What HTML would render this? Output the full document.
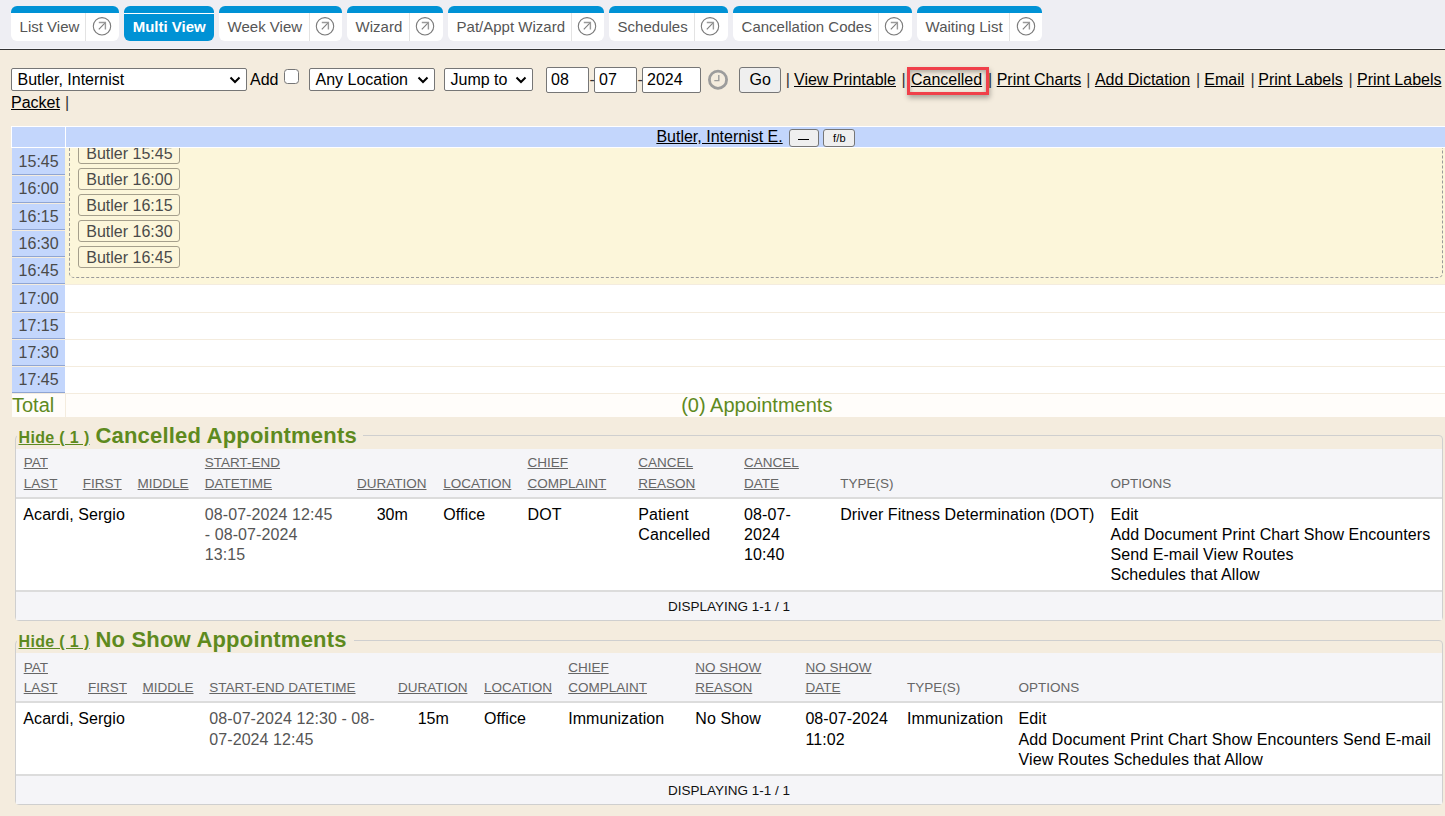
<!DOCTYPE html><html><head><meta charset="utf-8"><style>
*{box-sizing:border-box}
html,body{margin:0;padding:0}
body{width:1445px;height:816px;overflow:hidden;position:relative;background:#f4ecde;font-family:"Liberation Sans",sans-serif}
.abs{position:absolute}
.t{position:absolute;white-space:nowrap;line-height:1;font-family:"Liberation Sans",sans-serif}
.u{text-decoration:underline}
#bar{position:absolute;left:0;top:0;width:1445px;height:49px;background:#eeeef3;border-bottom:1px solid #f6f6fa}
#bar:after{content:"";position:absolute;left:0;top:49px;width:1445px;height:1px;background:#333}
.tab{position:absolute;top:6px;height:35px;background:#fff;border-top:7px solid #0092d5;border-radius:6px 6px 6px 6px}
.tab.act{background:#0092d5;border-top:7px solid #0092d5}
.tab.act:after{content:"";position:absolute;left:0;right:0;top:0;height:1px;background:#fff}
.tdiv{position:absolute;top:13px;width:1px;height:28px;background:#e3e3e3}
.ico{position:absolute;width:20px;height:20px}
.ico svg{display:block}
.sel{position:absolute;top:68px;height:23px;background:#fff;border:1px solid #767676;border-radius:2px}
.chev{position:absolute}
.chev svg{display:block}
.cb{position:absolute;width:15px;height:15px;background:#fff;border:1px solid #767676;border-radius:3.5px}
.inp{position:absolute;background:#fff;border:1px solid #767676;border-radius:2px}
.btn{position:absolute;background:#efefef;border:1px solid #767676;border-radius:3px}
.sbtn{position:absolute;background:#efefef;border:1px solid #767676;border-radius:3px}
.sep{position:absolute;width:1px;height:16px;background:#333}
#hl{position:absolute;left:907px;top:67px;width:82px;height:28px;border:3px solid #f0404a;box-shadow:1px 3px 5px rgba(0,0,0,.3), inset 0 2px 4px rgba(0,0,0,.3)}
.tc{position:absolute;left:12px;width:53px;background:#c3d6fc;border-bottom:1px solid #8fa5d3;box-sizing:content-box}
.abtn{position:absolute;width:102px;height:22px;border:1px solid #a59f8c;border-radius:3px;background:#fcf6da}
.fs{position:absolute;left:15px;width:1428px;border:1px solid #cfcfcf;border-radius:4px}
</style></head><body>
<div id="bar"></div>
<div class="tab" style="left:11px;width:108px"></div>
<div class="t " style="left:19.6px;top:19.00px;font-size:15px;color:#555;">List View</div>
<div class="tdiv" style="left:85px"></div>
<div class="ico" style="left:91.9px;top:16.4px"><svg width="20" height="20" viewBox="0 0 20 20"><circle cx="10" cy="10.3" r="8.7" fill="none" stroke="#7a7a7a" stroke-width="1.1"/><path d="M6.8 13.3 L13.3 6.7" fill="none" stroke="#7e7e7e" stroke-width="1.1"/><path d="M6.8 6.5 H13.4 V13.5" fill="none" stroke="#9a9a9a" stroke-width="1.4"/></svg></div>
<div class="tab act" style="left:124px;width:90px"></div>
<div class="t " style="left:132.7px;top:19.00px;font-size:15px;color:#fff;font-weight:bold;">Multi View</div>
<div class="tab" style="left:219px;width:123px"></div>
<div class="t " style="left:227.6px;top:19.00px;font-size:15px;color:#555;">Week View</div>
<div class="tdiv" style="left:309px"></div>
<div class="ico" style="left:315.4px;top:16.4px"><svg width="20" height="20" viewBox="0 0 20 20"><circle cx="10" cy="10.3" r="8.7" fill="none" stroke="#7a7a7a" stroke-width="1.1"/><path d="M6.8 13.3 L13.3 6.7" fill="none" stroke="#7e7e7e" stroke-width="1.1"/><path d="M6.8 6.5 H13.4 V13.5" fill="none" stroke="#9a9a9a" stroke-width="1.4"/></svg></div>
<div class="tab" style="left:347px;width:96px"></div>
<div class="t " style="left:355.6px;top:19.00px;font-size:15px;color:#555;">Wizard</div>
<div class="tdiv" style="left:409px"></div>
<div class="ico" style="left:415.3px;top:16.4px"><svg width="20" height="20" viewBox="0 0 20 20"><circle cx="10" cy="10.3" r="8.7" fill="none" stroke="#7a7a7a" stroke-width="1.1"/><path d="M6.8 13.3 L13.3 6.7" fill="none" stroke="#7e7e7e" stroke-width="1.1"/><path d="M6.8 6.5 H13.4 V13.5" fill="none" stroke="#9a9a9a" stroke-width="1.4"/></svg></div>
<div class="tab" style="left:448px;width:156px"></div>
<div class="t " style="left:456.6px;top:19.00px;font-size:15px;color:#555;">Pat/Appt Wizard</div>
<div class="tdiv" style="left:571px"></div>
<div class="ico" style="left:577.2px;top:16.4px"><svg width="20" height="20" viewBox="0 0 20 20"><circle cx="10" cy="10.3" r="8.7" fill="none" stroke="#7a7a7a" stroke-width="1.1"/><path d="M6.8 13.3 L13.3 6.7" fill="none" stroke="#7e7e7e" stroke-width="1.1"/><path d="M6.8 6.5 H13.4 V13.5" fill="none" stroke="#9a9a9a" stroke-width="1.4"/></svg></div>
<div class="tab" style="left:609px;width:119px"></div>
<div class="t " style="left:617.6px;top:19.00px;font-size:15px;color:#555;">Schedules</div>
<div class="tdiv" style="left:694px"></div>
<div class="ico" style="left:700.4px;top:16.4px"><svg width="20" height="20" viewBox="0 0 20 20"><circle cx="10" cy="10.3" r="8.7" fill="none" stroke="#7a7a7a" stroke-width="1.1"/><path d="M6.8 13.3 L13.3 6.7" fill="none" stroke="#7e7e7e" stroke-width="1.1"/><path d="M6.8 6.5 H13.4 V13.5" fill="none" stroke="#9a9a9a" stroke-width="1.4"/></svg></div>
<div class="tab" style="left:733px;width:179px"></div>
<div class="t " style="left:741.6px;top:19.00px;font-size:15px;color:#555;">Cancellation Codes</div>
<div class="tdiv" style="left:878px"></div>
<div class="ico" style="left:884.1px;top:16.4px"><svg width="20" height="20" viewBox="0 0 20 20"><circle cx="10" cy="10.3" r="8.7" fill="none" stroke="#7a7a7a" stroke-width="1.1"/><path d="M6.8 13.3 L13.3 6.7" fill="none" stroke="#7e7e7e" stroke-width="1.1"/><path d="M6.8 6.5 H13.4 V13.5" fill="none" stroke="#9a9a9a" stroke-width="1.4"/></svg></div>
<div class="tab" style="left:917px;width:125px"></div>
<div class="t " style="left:925.6px;top:19.00px;font-size:15px;color:#555;">Waiting List</div>
<div class="tdiv" style="left:1009px"></div>
<div class="ico" style="left:1015.8px;top:16.4px"><svg width="20" height="20" viewBox="0 0 20 20"><circle cx="10" cy="10.3" r="8.7" fill="none" stroke="#7a7a7a" stroke-width="1.1"/><path d="M6.8 13.3 L13.3 6.7" fill="none" stroke="#7e7e7e" stroke-width="1.1"/><path d="M6.8 6.5 H13.4 V13.5" fill="none" stroke="#9a9a9a" stroke-width="1.4"/></svg></div>
<div class="sel" style="left:11px;width:236px"></div><div class="t " style="left:17.5px;top:72.00px;font-size:16px;color:#000;">Butler, Internist</div><div class="chev" style="left:228.5px;top:76px"><svg width="12" height="8" viewBox="0 0 12 8"><path d="M1.5 1.5 L6 6 L10.5 1.5" fill="none" stroke="#000" stroke-width="2"/></svg></div>
<div class="t " style="left:250px;top:72.00px;font-size:16px;color:#000;">Add</div>
<div class="cb" style="left:284px;top:69px"></div>
<div class="sel" style="left:309px;width:126px"></div><div class="t " style="left:315.5px;top:72.00px;font-size:16px;color:#000;">Any Location</div><div class="chev" style="left:416.5px;top:76px"><svg width="12" height="8" viewBox="0 0 12 8"><path d="M1.5 1.5 L6 6 L10.5 1.5" fill="none" stroke="#000" stroke-width="2"/></svg></div>
<div class="sel" style="left:444px;width:89px"></div><div class="t " style="left:450.5px;top:72.00px;font-size:16px;color:#000;">Jump to</div><div class="chev" style="left:514.5px;top:76px"><svg width="12" height="8" viewBox="0 0 12 8"><path d="M1.5 1.5 L6 6 L10.5 1.5" fill="none" stroke="#000" stroke-width="2"/></svg></div>
<div class="inp" style="left:546px;top:67px;width:43px;height:26px"></div>
<div class="t " style="left:551px;top:72.00px;font-size:16px;color:#000;">08</div>
<div class="inp" style="left:594px;top:67px;width:43px;height:26px"></div>
<div class="t " style="left:599px;top:72.00px;font-size:16px;color:#000;">07</div>
<div class="inp" style="left:642px;top:67px;width:59px;height:26px"></div>
<div class="t " style="left:647px;top:72.00px;font-size:16px;color:#000;">2024</div>
<div class="t " style="left:589.5px;top:72.00px;font-size:16px;color:#333;">-</div>
<div class="t " style="left:637.5px;top:72.00px;font-size:16px;color:#333;">-</div>
<svg class="abs" style="left:707px;top:69px" width="22" height="22" viewBox="0 0 22 22"><circle cx="11" cy="10.7" r="8.6" fill="none" stroke="#9c9c9c" stroke-width="2.8"/><path d="M11.8 6 V11.6 H7.3" fill="none" stroke="#9c9c9c" stroke-width="1.4"/></svg>
<div class="btn" style="left:739px;top:67px;width:42px;height:26px"></div>
<div class="t " style="left:749.5px;top:72.00px;font-size:16px;color:#000;">Go</div>
<div class="t u" style="left:794px;top:72.00px;font-size:16px;color:#000;">View Printable</div>
<div class="t u" style="left:911px;top:72.00px;font-size:16px;color:#000;">Cancelled</div>
<div class="t u" style="left:996.7px;top:72.00px;font-size:16px;color:#000;">Print Charts</div>
<div class="t u" style="left:1094.9px;top:72.00px;font-size:16px;color:#000;">Add Dictation</div>
<div class="t u" style="left:1204.3px;top:72.00px;font-size:16px;color:#000;">Email</div>
<div class="t u" style="left:1258.3px;top:72.00px;font-size:16px;color:#000;">Print Labels</div>
<div class="t u" style="left:1357px;top:72.00px;font-size:16px;color:#000;">Print Labels</div>
<div class="t " style="left:785.7px;top:72.00px;font-size:16px;color:#333;">|</div>
<div class="t " style="left:901.5px;top:72.00px;font-size:16px;color:#333;">|</div>
<div class="t " style="left:988.1px;top:72.00px;font-size:16px;color:#333;">|</div>
<div class="t " style="left:1086.3px;top:72.00px;font-size:16px;color:#333;">|</div>
<div class="t " style="left:1196.0px;top:72.00px;font-size:16px;color:#333;">|</div>
<div class="t " style="left:1250.4px;top:72.00px;font-size:16px;color:#333;">|</div>
<div class="t " style="left:1348.5px;top:72.00px;font-size:16px;color:#333;">|</div>
<div class="t u" style="left:11px;top:95.00px;font-size:16px;color:#000;">Packet</div>
<div class="t " style="left:65px;top:95.00px;font-size:16px;color:#333;">|</div>
<div id="hl"></div>
<div class="abs" style="left:11px;top:126px;width:1434px;height:22px;background:#fff"></div>
<div class="abs" style="left:12px;top:127px;width:53px;height:20px;background:#c3d6fc"></div>
<div class="abs" style="left:66px;top:127px;width:1379px;height:20px;background:#c3d6fc"></div>
<div class="t u" style="left:656.4px;top:129.00px;font-size:16px;color:#000;">Butler, Internist E.</div>
<div class="sbtn" style="left:789px;top:129px;width:30px;height:18px"></div>
<div class="abs" style="left:798px;top:139px;width:11px;height:1px;background:#000"></div>
<div class="sbtn" style="left:823px;top:129px;width:32px;height:18px"></div>
<div class="t " style="left:833px;top:133.00px;font-size:11px;color:#000;letter-spacing:0.2px;">f/b</div>
<div class="tc" style="top:148px;height:26px"></div>
<div class="t " style="left:18.6px;top:154.00px;font-size:16px;color:#4a4a4a;">15:45</div>
<div class="tc" style="top:176px;height:26px"></div>
<div class="t " style="left:18.6px;top:181.00px;font-size:16px;color:#4a4a4a;">16:00</div>
<div class="tc" style="top:204px;height:25px"></div>
<div class="t " style="left:18.6px;top:209.00px;font-size:16px;color:#4a4a4a;">16:15</div>
<div class="tc" style="top:231px;height:25px"></div>
<div class="t " style="left:18.6px;top:236.00px;font-size:16px;color:#4a4a4a;">16:30</div>
<div class="tc" style="top:258px;height:25px"></div>
<div class="t " style="left:18.6px;top:263.00px;font-size:16px;color:#4a4a4a;">16:45</div>
<div class="tc" style="top:285px;height:26px"></div>
<div class="t " style="left:18.6px;top:291.00px;font-size:16px;color:#4a4a4a;">17:00</div>
<div class="tc" style="top:313px;height:25px"></div>
<div class="t " style="left:18.6px;top:318.00px;font-size:16px;color:#4a4a4a;">17:15</div>
<div class="tc" style="top:340px;height:25px"></div>
<div class="t " style="left:18.6px;top:345.00px;font-size:16px;color:#4a4a4a;">17:30</div>
<div class="tc" style="top:367px;height:25px"></div>
<div class="t " style="left:18.6px;top:372.00px;font-size:16px;color:#4a4a4a;">17:45</div>
<div class="abs" style="left:65px;top:285px;width:1380px;height:27px;background:#fff"></div>
<div class="abs" style="left:65px;top:313px;width:1380px;height:26px;background:#fff"></div>
<div class="abs" style="left:65px;top:340px;width:1380px;height:26px;background:#fff"></div>
<div class="abs" style="left:65px;top:367px;width:1380px;height:26px;background:#fff"></div>
<div class="abs" style="left:12px;top:394px;width:53px;height:23px;background:#fffdfa"></div>
<div class="abs" style="left:66px;top:394px;width:1379px;height:23px;background:#fffdfa"></div>
<div class="t " style="left:12px;top:395.00px;font-size:20px;color:#5e8a1e;">Total</div>
<div class="t " style="left:681.2px;top:395.00px;font-size:20px;color:#5e8a1e;">(0) Appointments</div>
<div class="abs" style="left:65px;top:148px;width:1380px;height:136px;background:#fcf6da;overflow:hidden"><div style="position:absolute;left:4px;top:-20px;width:1374px;height:150px;border:1px dashed #9a9a9a;border-radius:5px"></div>
<div class="abtn" style="left:13px;top:-6px"></div>
<div class="t" style="left:21.3px;top:-2.00px;font-size:16px;color:#4a4a4a">Butler 15:45</div>
<div class="abtn" style="left:13px;top:20px"></div>
<div class="t" style="left:21.3px;top:24.00px;font-size:16px;color:#4a4a4a">Butler 16:00</div>
<div class="abtn" style="left:13px;top:46px"></div>
<div class="t" style="left:21.3px;top:50.00px;font-size:16px;color:#4a4a4a">Butler 16:15</div>
<div class="abtn" style="left:13px;top:72px"></div>
<div class="t" style="left:21.3px;top:76.00px;font-size:16px;color:#4a4a4a">Butler 16:30</div>
<div class="abtn" style="left:13px;top:98px"></div>
<div class="t" style="left:21.3px;top:102.00px;font-size:16px;color:#4a4a4a">Butler 16:45</div>
</div>
<div class="fs" style="top:435px;height:186px"></div>
<div class="abs" style="left:17px;top:433px;width:346px;height:5px;background:#f4ecde"></div>
<div class="abs" style="left:16px;top:449px;width:1426px;height:48px;background:#f5f5f8"></div>
<div class="abs" style="left:16px;top:497px;width:1426px;height:2px;background:#dcdcdc"></div>
<div class="abs" style="left:16px;top:499px;width:1426px;height:91px;background:#fff"></div>
<div class="abs" style="left:16px;top:590px;width:1426px;height:2px;background:#dcdcdc"></div>
<div class="abs" style="left:16px;top:592px;width:1426px;height:28px;background:#f5f5f8"></div>
<div class="t u" style="left:18.5px;top:429.80px;font-size:16px;color:#5e8a1e;font-weight:bold;letter-spacing:0.35px;">Hide ( 1 )</div>
<div class="t " style="left:95.4px;top:425.20px;font-size:22px;color:#5e8a1e;font-weight:bold;letter-spacing:0.2px;">Cancelled Appointments</div>
<div class="t u" style="left:23.7px;top:456.00px;font-size:13.5px;color:#666;">PAT</div>
<div class="t u" style="left:204.8px;top:456.00px;font-size:13.5px;color:#666;">START-END</div>
<div class="t u" style="left:527.5px;top:456.00px;font-size:13.5px;color:#666;">CHIEF</div>
<div class="t u" style="left:638.3px;top:456.00px;font-size:13.5px;color:#666;">CANCEL</div>
<div class="t u" style="left:744.1px;top:456.00px;font-size:13.5px;color:#666;">CANCEL</div>
<div class="t u" style="left:23.7px;top:477.00px;font-size:13.5px;color:#666;">LAST</div>
<div class="t u" style="left:82.7px;top:477.00px;font-size:13.5px;color:#666;">FIRST</div>
<div class="t u" style="left:137.6px;top:477.00px;font-size:13.5px;color:#666;">MIDDLE</div>
<div class="t u" style="left:204.8px;top:477.00px;font-size:13.5px;color:#666;">DATETIME</div>
<div class="t u" style="left:357px;top:477.00px;font-size:13.5px;color:#666;">DURATION</div>
<div class="t u" style="left:443.3px;top:477.00px;font-size:13.5px;color:#666;">LOCATION</div>
<div class="t u" style="left:527.5px;top:477.00px;font-size:13.5px;color:#666;">COMPLAINT</div>
<div class="t u" style="left:638.3px;top:477.00px;font-size:13.5px;color:#666;">REASON</div>
<div class="t u" style="left:744.1px;top:477.00px;font-size:13.5px;color:#666;">DATE</div>
<div class="t " style="left:840.2px;top:477.00px;font-size:13.5px;color:#666;">TYPE(S)</div>
<div class="t " style="left:1110.5px;top:477.00px;font-size:13.5px;color:#666;">OPTIONS</div>
<div class="t " style="left:23.3px;top:507.00px;font-size:16px;color:#000;letter-spacing:0.08px;">Acardi, Sergio</div>
<div class="t " style="left:204.8px;top:507.00px;font-size:16px;color:#555;letter-spacing:0.08px;">08-07-2024 12:45</div>
<div class="t " style="left:204.8px;top:527.00px;font-size:16px;color:#555;letter-spacing:0.08px;">- 08-07-2024</div>
<div class="t " style="left:204.8px;top:547.00px;font-size:16px;color:#555;letter-spacing:0.08px;">13:15</div>
<div class="t" style="left:357px;width:70.39999999999998px;text-align:center;top:507.00px;font-size:16px;color:#000">30m</div>
<div class="t " style="left:443.3px;top:507.00px;font-size:16px;color:#000;letter-spacing:0.08px;">Office</div>
<div class="t " style="left:527.5px;top:507.00px;font-size:16px;color:#000;letter-spacing:0.08px;">DOT</div>
<div class="t " style="left:638.3px;top:507.00px;font-size:16px;color:#000;letter-spacing:0.08px;">Patient</div>
<div class="t " style="left:638.3px;top:527.00px;font-size:16px;color:#000;letter-spacing:0.08px;">Cancelled</div>
<div class="t " style="left:744.1px;top:507.00px;font-size:16px;color:#000;letter-spacing:0.08px;">08-07-</div>
<div class="t " style="left:744.1px;top:527.00px;font-size:16px;color:#000;letter-spacing:0.08px;">2024</div>
<div class="t " style="left:744.1px;top:547.00px;font-size:16px;color:#000;letter-spacing:0.08px;">10:40</div>
<div class="t " style="left:840.2px;top:507.00px;font-size:16px;color:#000;letter-spacing:0.08px;">Driver Fitness Determination (DOT)</div>
<div class="t " style="left:1110.5px;top:507.00px;font-size:16px;color:#000;letter-spacing:0.08px;">Edit</div>
<div class="t " style="left:1110.5px;top:527.00px;font-size:16px;color:#000;letter-spacing:0.08px;">Add Document Print Chart Show Encounters</div>
<div class="t " style="left:1110.5px;top:547.00px;font-size:16px;color:#000;letter-spacing:0.08px;">Send E-mail View Routes</div>
<div class="t " style="left:1110.5px;top:567.00px;font-size:16px;color:#000;letter-spacing:0.08px;">Schedules that Allow</div>
<div class="t" style="left:16px;width:1426px;text-align:center;top:600.00px;font-size:13.5px;color:#111">DISPLAYING 1-1 / 1</div>
<div class="fs" style="top:640px;height:165px"></div>
<div class="abs" style="left:17px;top:638px;width:337px;height:5px;background:#f4ecde"></div>
<div class="abs" style="left:16px;top:653px;width:1426px;height:48px;background:#f5f5f8"></div>
<div class="abs" style="left:16px;top:701px;width:1426px;height:2px;background:#dcdcdc"></div>
<div class="abs" style="left:16px;top:703px;width:1426px;height:71px;background:#fff"></div>
<div class="abs" style="left:16px;top:774px;width:1426px;height:2px;background:#dcdcdc"></div>
<div class="abs" style="left:16px;top:776px;width:1426px;height:28px;background:#f5f5f8"></div>
<div class="t u" style="left:18.5px;top:634.00px;font-size:16px;color:#5e8a1e;font-weight:bold;letter-spacing:0.35px;">Hide ( 1 )</div>
<div class="t " style="left:95.4px;top:629.40px;font-size:22px;color:#5e8a1e;font-weight:bold;letter-spacing:0.2px;">No Show Appointments</div>
<div class="t u" style="left:23.7px;top:661.20px;font-size:13.5px;color:#666;">PAT</div>
<div class="t u" style="left:568.2px;top:661.20px;font-size:13.5px;color:#666;">CHIEF</div>
<div class="t u" style="left:695.3px;top:661.20px;font-size:13.5px;color:#666;">NO SHOW</div>
<div class="t u" style="left:805.4px;top:661.20px;font-size:13.5px;color:#666;">NO SHOW</div>
<div class="t u" style="left:23.7px;top:681.30px;font-size:13.5px;color:#666;">LAST</div>
<div class="t u" style="left:88px;top:681.30px;font-size:13.5px;color:#666;">FIRST</div>
<div class="t u" style="left:142.5px;top:681.30px;font-size:13.5px;color:#666;">MIDDLE</div>
<div class="t u" style="left:209.3px;top:681.30px;font-size:13.5px;color:#666;">START-END DATETIME</div>
<div class="t u" style="left:397.9px;top:681.30px;font-size:13.5px;color:#666;">DURATION</div>
<div class="t u" style="left:484px;top:681.30px;font-size:13.5px;color:#666;">LOCATION</div>
<div class="t u" style="left:568.2px;top:681.30px;font-size:13.5px;color:#666;">COMPLAINT</div>
<div class="t u" style="left:695.3px;top:681.30px;font-size:13.5px;color:#666;">REASON</div>
<div class="t u" style="left:805.4px;top:681.30px;font-size:13.5px;color:#666;">DATE</div>
<div class="t " style="left:907px;top:681.30px;font-size:13.5px;color:#666;">TYPE(S)</div>
<div class="t " style="left:1018.6px;top:681.30px;font-size:13.5px;color:#666;">OPTIONS</div>
<div class="t " style="left:23.3px;top:711.00px;font-size:16px;color:#000;letter-spacing:0.08px;">Acardi, Sergio</div>
<div class="t " style="left:209.3px;top:711.00px;font-size:16px;color:#555;letter-spacing:0.08px;">08-07-2024 12:30 - 08-</div>
<div class="t " style="left:209.3px;top:731.60px;font-size:16px;color:#555;letter-spacing:0.08px;">07-2024 12:45</div>
<div class="t" style="left:397.9px;width:70.60000000000002px;text-align:center;top:711.00px;font-size:16px;color:#000">15m</div>
<div class="t " style="left:484px;top:711.00px;font-size:16px;color:#000;letter-spacing:0.08px;">Office</div>
<div class="t " style="left:568.2px;top:711.00px;font-size:16px;color:#000;letter-spacing:0.08px;">Immunization</div>
<div class="t " style="left:695.3px;top:711.00px;font-size:16px;color:#000;letter-spacing:0.08px;">No Show</div>
<div class="t " style="left:805.4px;top:711.00px;font-size:16px;color:#000;letter-spacing:0.08px;">08-07-2024</div>
<div class="t " style="left:805.4px;top:731.60px;font-size:16px;color:#000;letter-spacing:0.08px;">11:02</div>
<div class="t " style="left:907px;top:711.00px;font-size:16px;color:#000;letter-spacing:0.08px;">Immunization</div>
<div class="t " style="left:1018.6px;top:711.00px;font-size:16px;color:#000;letter-spacing:0.08px;">Edit</div>
<div class="t " style="left:1018.6px;top:731.60px;font-size:16px;color:#000;letter-spacing:0.08px;">Add Document Print Chart Show Encounters Send E-mail</div>
<div class="t " style="left:1018.6px;top:751.60px;font-size:16px;color:#000;letter-spacing:0.08px;">View Routes Schedules that Allow</div>
<div class="t" style="left:16px;width:1426px;text-align:center;top:784.00px;font-size:13.5px;color:#111">DISPLAYING 1-1 / 1</div>
</body></html>
